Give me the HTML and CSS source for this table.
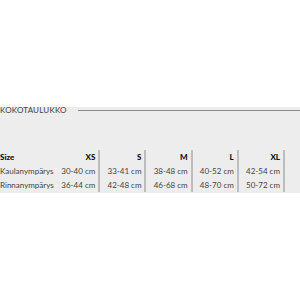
FILE: index.html
```html
<!DOCTYPE html>
<html lang="fi">
<head>
<meta charset="utf-8">
<link rel="stylesheet" href="styles.css">
</head>
<body>
<section class="size-chart">
  <div class="title-row">
    <span class="title">KOKOTAULUKKO</span>
    <span class="rule"></span>
  </div>
  <table class="chart">
    <colgroup>
      <col class="c-label"><col class="c-size"><col class="c-size"><col class="c-size"><col class="c-size"><col class="c-size">
    </colgroup>
    <tr class="head">
      <th class="label">Size</th><th>XS</th><th>S</th><th>M</th><th>L</th><th>XL</th>
    </tr>
    <tr>
      <td class="label">Kaulanympärys</td><td>30-40 cm</td><td>33-41 cm</td><td>38-48 cm</td><td>40-52 cm</td><td>42-54 cm</td>
    </tr>
    <tr>
      <td class="label">Rinnanympärys</td><td>36-44 cm</td><td>42-48 cm</td><td>46-68 cm</td><td>48-70 cm</td><td>50-72 cm</td>
    </tr>
  </table>
</section>
</body>
</html>
```
FILE: styles.css
```css
html, body {
  margin: 0;
  padding: 0;
  background: #fff;
}
body {
  font-family: "Lato", "Open Sans", sans-serif;
  color: #333;
}
.size-chart {
  margin-top: 107px;
  background: #ededed;
  height: 86px;
  box-sizing: border-box;
}
.title-row {
  display: flex;
  align-items: center;
  gap: 11px;
  height: 7px;
}
.title {
  font-size: 8px;
  letter-spacing: 0.2px;
  line-height: 7px;
  color: #444;
}
.rule {
  flex: 1;
  height: 1px;
  background: #8a8a8a;
}
.chart {
  margin-top: 36px;
  border-collapse: collapse;
  table-layout: fixed;
  width: 285px;
  font-size: 8px;
}
.c-label { width: 53px; }
.c-size { width: 46px; }
.chart th, .chart td {
  height: 14px;
  padding: 0 3px 0 0;
  text-align: right;
  white-space: nowrap;
  border-right: 2px solid #bdbdbd;
  color: #444;
  font-weight: normal;
}
.chart .head th {
  font-weight: 900;
  color: #111;
}
.chart .label {
  text-align: left;
  border-right: none;
  padding: 0;
}
```
